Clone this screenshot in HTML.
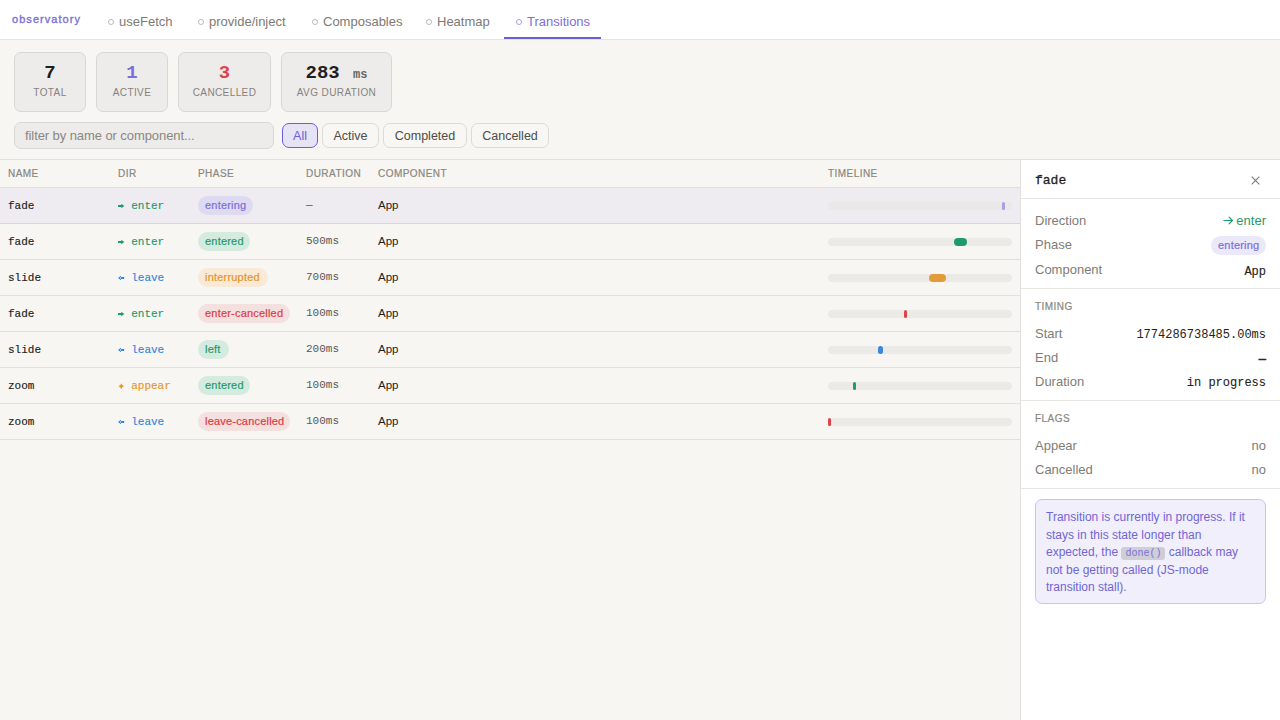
<!DOCTYPE html>
<html><head><meta charset="utf-8">
<style>
*{box-sizing:border-box;margin:0;padding:0}
html,body{width:1280px;height:720px;overflow:hidden}
body{background:#f7f6f3;font-family:"Liberation Sans",sans-serif;color:#1f1f1f;position:relative}
.mono{font-family:"Liberation Mono",monospace}
.a{position:absolute;white-space:nowrap}
#hdr{position:absolute;left:0;top:0;width:1280px;height:40px;background:#fff;border-bottom:1px solid #e4e4e2}
.brand{position:absolute;left:12px;top:13px;font-size:11px;line-height:13px;font-weight:normal;-webkit-text-stroke:0.35px #7b70d9;letter-spacing:1.05px;color:#7b70d9}
.tab{position:absolute;top:14px;font-size:13px;line-height:15px;color:#7d7a74}
.tab .dot{display:inline-block;width:6px;height:6px;border:1px solid #bdbab4;border-radius:50%;margin-right:5px;vertical-align:1px}
.tab.on{color:#7b70d9}
.tab.on .dot{border-color:#a9a2e8}
.uline{position:absolute;left:504px;top:37px;width:97px;height:2px;background:#6b5fd6}
.card{position:absolute;top:52px;height:60px;background:#edecea;border:1px solid #d8d7d3;border-radius:7px;text-align:center}
.card .n{position:absolute;left:0;right:0;top:10px;font-family:"Liberation Mono",monospace;font-weight:bold;font-size:19px;line-height:20px}
.card .l{position:absolute;left:0;right:0;top:34px;font-size:10px;line-height:12px;letter-spacing:0.4px;color:#85827c}
.input{position:absolute;left:14px;top:122px;width:260px;height:27px;letter-spacing:-0.08px;background:#edecea;border:1px solid #d8d7d3;border-radius:7px;font-size:13px;line-height:26px;padding-left:10px;color:#8a8782}
.btn{position:absolute;top:123px;height:25px;border:1px solid #dddbd7;border-radius:7px;font-size:12.5px;line-height:25px;text-align:center;color:#4e4c48;background:#f8f7f4}
.btn.on{border-color:#6b5fd6;background:#e6e3f5;color:#6b5fd6}
.tline{position:absolute;left:0;height:1px;background:#e1e0dc}
.th{position:absolute;top:168px;font-size:10px;line-height:12px;font-weight:normal;-webkit-text-stroke:0.2px #8a8780;letter-spacing:0.45px;color:#8a8780}
.row{position:absolute;left:0;width:1020px;height:36px;border-bottom:1px solid #e1e0dc}
.row.sel{background:#eeecf1;border-bottom-color:#d7d5dc}
.row .c{position:absolute;white-space:nowrap}
.nm{left:8px;top:12px;-webkit-text-stroke:0.15px #222;font-family:"Liberation Mono",monospace;font-size:11px;line-height:13px;color:#222}
.dir{left:118px;top:12px;-webkit-text-stroke:0.15px currentColor;font-family:"Liberation Mono",monospace;font-size:11px;line-height:13px}
.pill{position:absolute;height:19px;border-radius:10px;font-size:11px;line-height:19px;text-align:left;padding-left:7px;letter-spacing:0.2px;-webkit-text-stroke:0.2px currentColor}
.dur{left:306px;top:11px;font-family:"Liberation Mono",monospace;font-size:11px;line-height:13px;color:#5a5853}
.cmp{left:378px;top:10px;font-size:11.5px;line-height:14px;color:#222}
.track{position:absolute;left:828px;top:14px;width:184px;height:8px;border-radius:4px;background:#ebeae7}
.bar{position:absolute;top:0;height:8px;border-radius:4px}
.ic{display:inline-block;width:13.2px;height:13px;vertical-align:top;position:relative}.ic svg{position:absolute;left:0;top:3px}
.g{color:#1f9a6c}.b{color:#3585e0}.o{color:#e9961f}.r{color:#dc3f46}.p{color:#7b70d9}
.pg{background:#d6ebe0;color:#1f9a6c}
.po{background:#f8ead6;color:#e8942a}
.pr{background:#f4e0df;color:#e03a44}
.pp{background:#dedaf2;color:#7b70d9}
#panel{position:absolute;left:1020px;top:160px;width:260px;height:560px;background:#fff;border-left:1px solid #e1e0dc}
.hl{position:absolute;left:0;width:260px;height:1px;background:#e6e5e2}
.lab{position:absolute;left:14px;font-size:13px;line-height:15px;color:#7f7c76}
.val{position:absolute;right:14px;font-size:13px;line-height:15px;white-space:nowrap}
.sec{position:absolute;left:14px;font-size:10px;line-height:12px;font-weight:normal;-webkit-text-stroke:0.2px #8a8780;letter-spacing:0.45px;color:#8a8780}
.note{position:absolute;left:14px;top:339px;width:231px;height:105px;background:#f1effb;border:1px solid #c9c3f1;border-radius:7px;padding:9px 10px;font-size:12px;line-height:17.5px;color:#6f66d6}
.code{font-family:"Liberation Mono",monospace;font-size:10px;line-height:0;background:#cfcdd6;border-radius:3px;padding:1px 4px;color:#7b70d9}
</style></head>
<body>
<div id="hdr">
  <div class="brand">observatory</div>
  <div class="tab" style="left:108px"><span class="dot"></span>useFetch</div>
  <div class="tab" style="left:198px"><span class="dot"></span>provide/inject</div>
  <div class="tab" style="left:312px"><span class="dot"></span>Composables</div>
  <div class="tab" style="left:426px"><span class="dot"></span>Heatmap</div>
  <div class="tab on" style="left:516px"><span class="dot"></span>Transitions</div>
  <div class="uline"></div>
</div>

<div class="card" style="left:14px;width:72px"><div class="n">7</div><div class="l">TOTAL</div></div>
<div class="card" style="left:96px;width:72px"><div class="n" style="color:#7b70d9">1</div><div class="l">ACTIVE</div></div>
<div class="card" style="left:178px;width:93px"><div class="n" style="color:#e0434a">3</div><div class="l">CANCELLED</div></div>
<div class="card" style="left:281px;width:111px"><div class="n">283 <span style="font-size:12px;color:#6a6762;margin-left:2px">ms</span></div><div class="l">AVG DURATION</div></div>

<div class="input">filter by name or component...</div>
<div class="btn on" style="left:282px;width:36px">All</div>
<div class="btn" style="left:322px;width:57px">Active</div>
<div class="btn" style="left:383px;width:84px">Completed</div>
<div class="btn" style="left:471px;width:78px">Cancelled</div>

<div class="tline" style="top:159px;width:1280px"></div>
<div class="th" style="left:8px">NAME</div>
<div class="th" style="left:118px">DIR</div>
<div class="th" style="left:198px">PHASE</div>
<div class="th" style="left:306px">DURATION</div>
<div class="th" style="left:378px">COMPONENT</div>
<div class="th" style="left:828px">TIMELINE</div>
<div class="tline" style="top:187px;width:1020px"></div>

<div class="row sel" style="top:188px">
  <div class="c nm">fade</div><div class="c dir g"><span class="ic"><svg width="7" height="6" viewBox="0 0 7 6"><path d="M0 2.1H3.8V3.9H0Z M3.3 0.8L6.3 3L3.3 5.2Z" fill="currentColor"/></svg></span>enter</div>
  <div class="pill pp" style="left:198px;top:8px;width:55px">entering</div>
  <div class="c dur">—</div><div class="c cmp">App</div>
  <div class="track" style="background:#eae9e8"><div class="bar" style="left:174px;width:3px;background:#a99ee8;border-radius:2px"></div></div>
</div>
<div class="row" style="top:224px">
  <div class="c nm">fade</div><div class="c dir g"><span class="ic"><svg width="7" height="6" viewBox="0 0 7 6"><path d="M0 2.1H3.8V3.9H0Z M3.3 0.8L6.3 3L3.3 5.2Z" fill="currentColor"/></svg></span>enter</div>
  <div class="pill pg" style="left:198px;top:8px;width:52px">entered</div>
  <div class="c dur">500ms</div><div class="c cmp">App</div>
  <div class="track"><div class="bar" style="left:126px;width:13px;background:#1f9a6c"></div></div>
</div>
<div class="row" style="top:260px">
  <div class="c nm">slide</div><div class="c dir b"><span class="ic"><svg width="7" height="6" viewBox="0 0 7 6"><path d="M2.4 2.1H6.2V3.9H2.4Z M3 0.8L0 3L3 5.2Z" fill="currentColor"/></svg></span>leave</div>
  <div class="pill po" style="left:198px;top:8px;width:70px">interrupted</div>
  <div class="c dur">700ms</div><div class="c cmp">App</div>
  <div class="track"><div class="bar" style="left:101px;width:17px;background:#e39b3a"></div></div>
</div>
<div class="row" style="top:296px">
  <div class="c nm">fade</div><div class="c dir g"><span class="ic"><svg width="7" height="6" viewBox="0 0 7 6"><path d="M0 2.1H3.8V3.9H0Z M3.3 0.8L6.3 3L3.3 5.2Z" fill="currentColor"/></svg></span>enter</div>
  <div class="pill pr" style="left:198px;top:8px;width:92px">enter-cancelled</div>
  <div class="c dur">100ms</div><div class="c cmp">App</div>
  <div class="track"><div class="bar" style="left:76px;width:3px;background:#e0434a;border-radius:2px"></div></div>
</div>
<div class="row" style="top:332px">
  <div class="c nm">slide</div><div class="c dir b"><span class="ic"><svg width="7" height="6" viewBox="0 0 7 6"><path d="M2.4 2.1H6.2V3.9H2.4Z M3 0.8L0 3L3 5.2Z" fill="currentColor"/></svg></span>leave</div>
  <div class="pill pg" style="left:198px;top:8px;width:31px">left</div>
  <div class="c dur">200ms</div><div class="c cmp">App</div>
  <div class="track"><div class="bar" style="left:50px;width:5px;background:#3b86e0"></div></div>
</div>
<div class="row" style="top:368px">
  <div class="c nm">zoom</div><div class="c dir o"><span class="ic"><svg width="7" height="7" viewBox="0 0 7 7"><path d="M3.2 0.3Q3.7 2.8 6.1 3.3Q3.7 3.8 3.2 6.3Q2.7 3.8 0.3 3.3Q2.7 2.8 3.2 0.3Z" fill="currentColor"/></svg></span>appear</div>
  <div class="pill pg" style="left:198px;top:8px;width:52px">entered</div>
  <div class="c dur">100ms</div><div class="c cmp">App</div>
  <div class="track"><div class="bar" style="left:25px;width:3px;background:#1f9a6c;border-radius:2px"></div></div>
</div>
<div class="row" style="top:404px">
  <div class="c nm">zoom</div><div class="c dir b"><span class="ic"><svg width="7" height="6" viewBox="0 0 7 6"><path d="M2.4 2.1H6.2V3.9H2.4Z M3 0.8L0 3L3 5.2Z" fill="currentColor"/></svg></span>leave</div>
  <div class="pill pr" style="left:198px;top:8px;width:92px">leave-cancelled</div>
  <div class="c dur">100ms</div><div class="c cmp">App</div>
  <div class="track"><div class="bar" style="left:0px;width:3px;background:#e0434a;border-radius:2px"></div></div>
</div>

<div id="panel">
  <div class="a mono" style="left:14px;top:13px;font-size:13px;line-height:15px;-webkit-text-stroke:0.3px #1f1f1f;color:#1f1f1f">fade</div>
  <svg class="a" style="left:229.5px;top:15.5px" width="9" height="9" viewBox="0 0 9 9"><path d="M0.7 0.7L8.3 8.3M8.3 0.7L0.7 8.3" stroke="#7a7873" stroke-width="1.05"/></svg>
  <div class="hl" style="top:38px"></div>
  <div class="lab" style="top:53px">Direction</div><svg class="a" style="left:202px;top:56px" width="11" height="9" viewBox="0 0 11 9"><path d="M0.9 4.5H9.3M6.1 1.1L9.4 4.5L6.1 7.9" fill="none" stroke="#1f9a6c" stroke-width="1.2" stroke-linecap="round" stroke-linejoin="round"/></svg><div class="val g" style="top:53px">enter</div>
  <div class="lab" style="top:77px">Phase</div><div class="pill pp" style="right:14px;top:76px;width:55px;background:#ebe8fa">entering</div>
  <div class="lab" style="top:102px">Component</div><div class="val mono" style="top:105px;font-size:12px;-webkit-text-stroke:0.15px #1f1f1f">App</div>
  <div class="hl" style="top:128px"></div>
  <div class="sec" style="top:141px">TIMING</div>
  <div class="lab" style="top:166px">Start</div><div class="val mono" style="top:168px;font-size:12px;color:#222">1774286738485.00ms</div>
  <div class="lab" style="top:190px">End</div><div class="val mono" style="top:192.5px;font-size:12px;-webkit-text-stroke:0.4px #222">—</div>
  <div class="lab" style="top:214px">Duration</div><div class="val mono" style="top:216px;font-size:12px;color:#222;-webkit-text-stroke:0.1px #222">in progress</div>
  <div class="hl" style="top:240px"></div>
  <div class="sec" style="top:253px">FLAGS</div>
  <div class="lab" style="top:278px">Appear</div><div class="val" style="top:278px;color:#7f7c76">no</div>
  <div class="lab" style="top:302px">Cancelled</div><div class="val" style="top:302px;color:#7f7c76">no</div>
  <div class="hl" style="top:328px"></div>
  <div class="note">Transition is currently in progress. If it<br>stays in this state longer than<br>expected, the <span class="code">done()</span> callback may<br>not be getting called (JS-mode<br>transition stall).</div>
</div>
</body></html>
